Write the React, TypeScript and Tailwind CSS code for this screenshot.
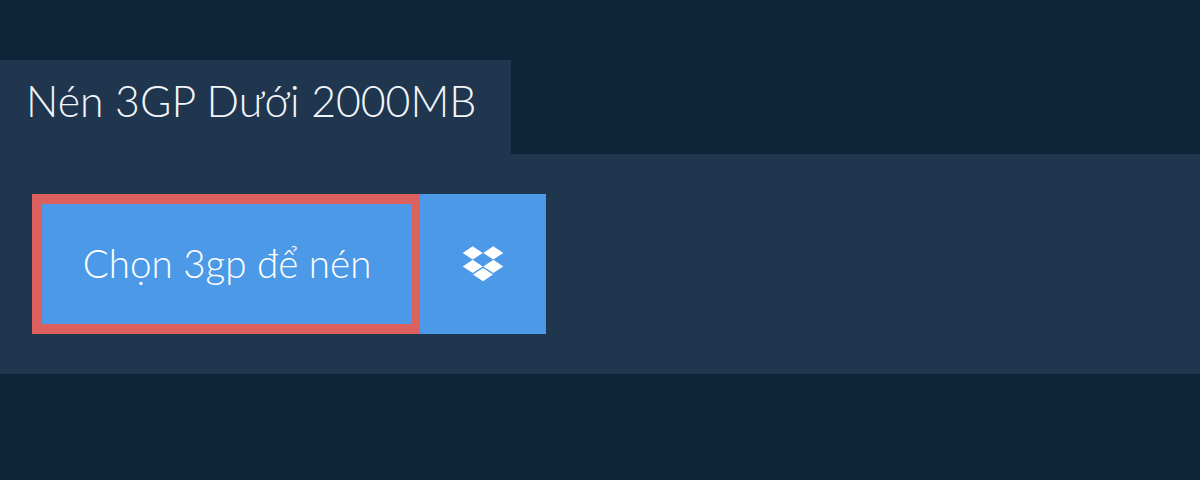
export default function App() {
  return (
    <div className="h-[480px] w-[1200px] overflow-hidden bg-[#0e2539] pt-[60px] font-['Lato',sans-serif] font-light text-white">
      <h1 className="h-[94px] w-[511px] bg-[#1f364e] pl-[26px] pt-[14px] text-[42.8px] font-light leading-[54px] text-[#f1f5f9]">Nén 3GP Dưới 2000MB</h1>
      <div className="h-[220px] w-full bg-[#1f364e] px-[32px] py-[40px]">
        <div className="flex h-[140px] w-[514px]">
          <button className="h-[140px] w-[388px] border-y-[10px] border-l-[10px] border-r-[8px] border-[#dc605d] bg-[#4c99e8] text-[38.6px] font-light text-white">Chọn 3gp để nén</button>
          <button className="flex h-[140px] w-[126px] items-center justify-center bg-[#4c99e8]">
            <svg width="42" height="38" viewBox="0 0 42 38" fill="white">
              <path d="M10.7 1.2 20.7 8l-10 6.6L.7 8z" />
              <path d="M31.3 1.2 41.3 8l-10 6.6L21.3 8z" />
              <path d="M10.7 14.8l10 6.6-10 6.6-10-6.6z" />
              <path d="M31.3 14.8l10 6.6-10 6.6-10-6.6z" />
              <path d="M21 23l10 6.6-10 6.6-10-6.6z" />
            </svg>
          </button>
        </div>
      </div>
    </div>
  );
}
